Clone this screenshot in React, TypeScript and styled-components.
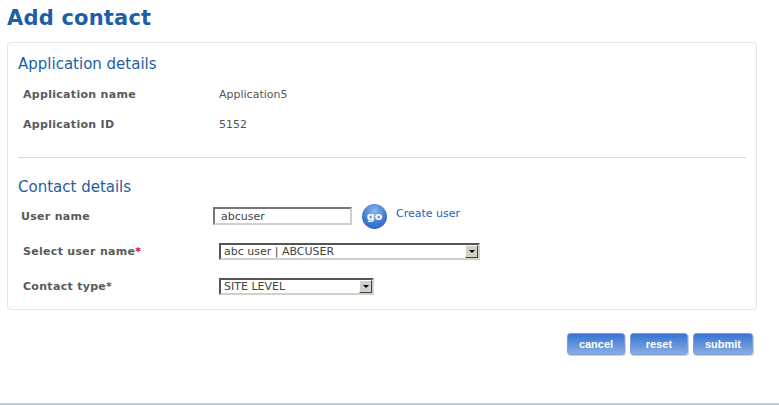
import React from "react";
import styled, { createGlobalStyle } from "styled-components";

const Global = createGlobalStyle`
  html, body { margin: 0; padding: 0; background: #fff; }
  body { font-family: "DejaVu Sans", Verdana, sans-serif; }
`;

const Page = styled.div`
  width: 779px; height: 405px; box-sizing: border-box;
  border-bottom: 2px solid #b9d0e4;
`;
const Title = styled.h1`
  margin: 0; padding: 6px 0 0 7px; height: 42px; box-sizing: border-box;
  font-size: 21px; font-weight: bold; color: #1d5ea6; letter-spacing: 0.2px;
`;
const Panel = styled.div`
  margin-left: 7px; width: 750px; height: 268px; box-sizing: border-box;
  border: 1px solid #e4e4e4; border-radius: 4px; padding: 12px 10px 0 10px;
`;
const Heading = styled.h2`
  margin: 0; font-size: 15px; font-weight: normal; color: #1d5ea6; height: 24px;
`;
const Row = styled.div<{ $h: number; $pl?: number }>`
  display: grid; grid-template-columns: 196px auto; align-items: center;
  height: ${p => p.$h}px; padding-left: ${p => p.$pl ?? 5}px;
`;
const Label = styled.div`
  font-size: 11px; font-weight: bold; color: #5a5a5a; letter-spacing: 0.3px;
`;
const Value = styled.div`
  font-size: 11px; color: #555;
`;
const Star = styled.span` color: #d00; `;
const Divider = styled.hr`
  border: none; border-top: 1px solid #d8d8d8; margin: 18px 0 20px 0;
`;
const Inline = styled.div`
  display: flex; align-items: center;
`;
const TextInput = styled.div`
  width: 139px; height: 18px; box-sizing: border-box;
  border: 2px solid #d4d0c8; border-top-color: #777; border-left-color: #777;
  font-size: 11px; color: #444; padding: 1px 6px; margin-left: -4px;
`;
const Go = styled.div`
  width: 25px; height: 25px; border-radius: 50%; margin-left: 10px;
  background: radial-gradient(circle at 50% 30%, #8cb6ec, #3b76cf 60%, #2a62bd);
  color: #fff; font-size: 11px; font-weight: bold;
  display: flex; align-items: center; justify-content: center;
`;
const Link = styled.span`
  color: #1b63b8; font-size: 11px; margin-left: 9px; margin-top: -5px;
`;
const Select = styled.div<{ $w: number }>`
  width: ${p => p.$w}px; height: 17px; box-sizing: border-box; display: flex;
  border: 2px solid #d4d0c8; border-top-color: #555; border-left-color: #555;
  font-size: 11px; color: #444; background: #fff;
`;
const SelText = styled.div` flex: 1; padding: 0 3px; line-height: 13px; `;
const Arrow = styled.div`
  width: 13px; height: 13px; box-sizing: border-box; background: #d4d0c8;
  border: 1px solid; border-color: #fff #404040 #404040 #fff;
  display: flex; align-items: center; justify-content: center;
  &::after { content: ""; border: 3px solid transparent; border-top: 3px solid #000; border-bottom: 0; }
`;
const Actions = styled.div`
  display: flex; justify-content: flex-end; gap: 5px; padding: 23px 26px 0 0;
`;
const Btn = styled.button<{ $w: number }>`
  width: ${p => p.$w}px; height: 22px; border: 1px solid #7e9fd0; border-radius: 3px;
  background: linear-gradient(#3473d2, #8aaee3); color: #fff;
  font-family: "Liberation Sans", Arial, sans-serif; font-weight: bold; font-size: 11px;
  padding: 0; box-shadow: 1px 1px 0 #c8d4e4;
`;

export default function App() {
  return (
    <Page>
      <Global />
      <Title>Add contact</Title>
      <Panel>
        <Heading>Application details</Heading>
        <Row $h={30}><Label>Application name</Label><Value>Application5</Value></Row>
        <Row $h={30}><Label>Application ID</Label><Value>5152</Value></Row>
        <Divider />
        <Heading>Contact details</Heading>
        <Row $h={28} $pl={3}><Label>User name</Label>
          <Inline><TextInput>abcuser</TextInput><Go>go</Go><Link>Create user</Link></Inline>
        </Row>
        <Row $h={42}><Label>Select user name<Star>*</Star></Label>
          <Select $w={261}><SelText>abc user | ABCUSER</SelText><Arrow /></Select>
        </Row>
        <Row $h={28}><Label>Contact type*</Label>
          <Select $w={155}><SelText>SITE LEVEL</SelText><Arrow /></Select>
        </Row>
      </Panel>
      <Actions>
        <Btn $w={58}>cancel</Btn>
        <Btn $w={58}>reset</Btn>
        <Btn $w={60}>submit</Btn>
      </Actions>
    </Page>
  );
}
